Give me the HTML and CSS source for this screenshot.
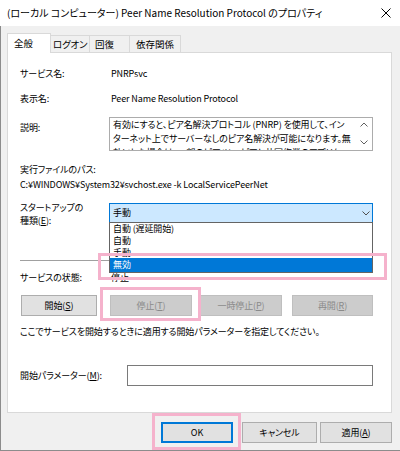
FILE: index.html
```html
<!DOCTYPE html>
<html lang="ja">
<head>
<meta charset="utf-8">
<title>Peer Name Resolution Protocol のプロパティ</title>
<link rel="stylesheet" href="styles.css">
</head>
<body>
<div class="window">
  <div class="titlebar">
    <span class="title">(ローカル コンピューター) Peer Name Resolution Protocol のプロパティ</span>
    <span class="close"><svg width="10" height="10" viewBox="0 0 10 10"><path d="M0.5 0.5L9.5 9.5M9.5 0.5L0.5 9.5" stroke="#000" stroke-width="1" fill="none"/></svg></span>
  </div>
  <div class="dlg">
    <div class="tabs">
      <div class="tab t1 active">全般</div>
      <div class="tab t2">ログオン</div>
      <div class="tab t3">回復</div>
      <div class="tab t4">依存関係</div>
    </div>
    <div class="panel">
      <div class="row">
        <span class="lbl">サービス名:</span><span class="val">PNRPsvc</span>
      </div>
      <div class="row r-gap">
        <span class="lbl">表示名:</span><span class="val">Peer Name Resolution Protocol</span>
      </div>
      <div class="row r-gap r-desc">
        <span class="lbl">説明:</span>
        <div class="descbox">
          <div class="desctext">有効にすると、ピア名解決プロトコル (PNRP) を使用して、イン<br>ターネット上でサーバーなしのピア名解決が可能になります。無<br>効にした場合は、一部のピア ツー ピアと共同作業のアプリケー</div>
          <div class="vscroll">
            <svg width="8" height="5" viewBox="0 0 8 5"><path d="M0.5 4.5L4 1L7.5 4.5" stroke="#606060" stroke-width="1" fill="none"/></svg>
            <svg width="8" height="5" viewBox="0 0 8 5"><path d="M0.5 0.5L4 4L7.5 0.5" stroke="#606060" stroke-width="1" fill="none"/></svg>
          </div>
        </div>
      </div>
      <div class="path-label">実行ファイルのパス:</div>
      <div class="path">C:¥WINDOWS¥System32¥svchost.exe -k LocalServicePeerNet</div>
      <div class="row r-start">
        <span class="lbl">スタートアップの<br>種類(<u>E</u>):</span>
        <div class="combo">
          <span>手動</span>
          <svg class="chev" width="8" height="5" viewBox="0 0 8 5"><path d="M0.5 0.5L4 4L7.5 0.5" stroke="#505050" stroke-width="1" fill="none"/></svg>
          <div class="dropdown">
            <div class="opt">自動 (遅延開始)</div>
            <div class="opt">自動</div>
            <div class="opt">手動</div>
            <div class="opt sel hl hl-item">無効</div>
          </div>
        </div>
      </div>
      <div class="sep"></div>
      <div class="row r-status">
        <span class="lbl">サービスの状態:</span><span class="val">停止</span>
      </div>
      <div class="btnrow">
        <button type="button" class="btn b-start">開始(<u>S</u>)</button>
        <button type="button" class="btn dis b-stop hl hl-stop">停止(<u>T</u>)</button>
        <button type="button" class="btn dis b-pause">一時停止(<u>P</u>)</button>
        <button type="button" class="btn dis b-resume">再開(<u>R</u>)</button>
      </div>
      <p class="hint">ここでサービスを開始するときに適用する開始パラメーターを指定してください。</p>
      <div class="r-param">
        <span class="lbl">開始パラメーター(<u>M</u>):</span>
        <div class="input"></div>
      </div>
    </div>
    <div class="footer">
      <button type="button" class="btn default b-ok hl hl-ok">OK</button>
      <button type="button" class="btn b-cancel">キャンセル</button>
      <button type="button" class="btn b-apply">適用(<u>A</u>)</button>
    </div>
  </div>
</div>
</body>
</html>
```
FILE: styles.css
```css
* { box-sizing: border-box; }
html, body { margin: 0; padding: 0; background: #f0f0f0; }
body {
  font-family: "Noto Sans CJK JP", "Noto Sans", sans-serif;
  font-size: 9px;
  letter-spacing: -0.12px;
  line-height: 14px;
  color: #000;
  font-feature-settings: "palt";
}
u { text-underline-offset: 1px; }

.window {
  width: 400px;
  height: 451px;
  position: relative;
  overflow: hidden;
  background: #f0f0f0;
}

.titlebar {
  height: 26px;
  background: #fff;
  display: flex;
  align-items: center;
  justify-content: space-between;
  padding: 0 9px 0 7px;
}
.title { white-space: nowrap; font-size: 10px; letter-spacing: 0; }
.close svg { display: block; }

.dlg {
  height: 425px;
  border-left: 1px solid #8c8c8c;
  border-bottom: 1px solid #8c8c8c;
  padding: 7px 8px 0 6px;
}

.tabs {
  display: flex;
  align-items: flex-end;
  height: 19px;
}
.tab {
  height: 17px;
  border: 1px solid #d9d9d9;
  border-bottom: 0;
  margin-left: -1px;
  line-height: 16px;
  background: #f0f0f0;
  font-size: 9.5px;
  letter-spacing: 0;
  white-space: nowrap;
  overflow: hidden;
}
.tab.active {
  height: 20px;
  margin-left: 0;
  margin-bottom: -1px;
  line-height: 18px;
  background: #fff;
  position: relative;
  z-index: 2;
}
.t1 { width: 44px; padding-left: 6px; }
.t2 { width: 40px; padding-left: 2px; letter-spacing: -0.2px; }
.t3 { width: 41px; padding-left: 5px; }
.t4 { width: 52px; padding-left: 6px; }

.panel {
  height: 361px;
  background: #fff;
  border: 1px solid #d9d9d9;
  padding: 14px 18px 0 12px;
}

.row {
  display: grid;
  grid-template-columns: 89px minmax(0, 1fr);
}
.val { padding-left: 2px; white-space: nowrap; }
.r-gap { margin-top: 11px; }
.r-desc .lbl { padding-top: 4px; }

.descbox {
  height: 34px;
  min-width: 0;
  border: 1px solid #acacac;
  display: flex;
  background: #fff;
}
.desctext {
  flex: 1 1 0;
  min-width: 0;
  padding-left: 3px;
  overflow: hidden;
  white-space: nowrap;
}
.vscroll {
  flex: 0 0 16px;
  display: flex;
  flex-direction: column;
  justify-content: space-between;
  align-items: center;
  padding: 4px 0 5px;
}
.vscroll svg { display: block; }

.path-label { margin-top: 12px; }
.path { margin-top: 1px; white-space: nowrap; }

.r-start { margin-top: 9px; }
.r-start .lbl { line-height: 13px; }

.combo {
  margin-top: 2px;
  height: 20px;
  position: relative;
  z-index: 5;
  border: 1px solid #0078d7;
  background: #cce8ff;
  display: flex;
  align-items: center;
  padding-left: 3px;
}
.chev { margin-left: auto; margin-right: 2px; display: block; }

.dropdown {
  position: absolute;
  top: 100%;
  left: -1px;
  right: -1px;
  background: #fff;
  border: 1px solid #646464;
}
.opt {
  height: 12px;
  line-height: 12px;
  padding-left: 3px;
  white-space: nowrap;
}
.opt.sel {
  height: 14px;
  line-height: 14px;
  margin-top: -1px;
  background: #0078d7;
  color: #fff;
}

.sep {
  margin-top: 33px;
  height: 1px;
  background: #a0a0a0;
}

.r-status { margin-top: 10px; }

.btnrow {
  margin-top: 10px;
  display: flex;
  height: 21px;
}

.btn {
  appearance: none;
  -webkit-appearance: none;
  margin: 0;
  height: 21px;
  padding: 0;
  border: 1px solid #adadad;
  background: #e1e1e1;
  font: inherit;
  letter-spacing: inherit;
  line-height: 14px;
  color: #000;
  display: flex;
  align-items: center;
  justify-content: center;
  white-space: nowrap;
}
.btn.dis {
  background: #cccccc;
  border-color: #bfbfbf;
  color: #8a8a8a;
}
.btn.default { border: 2px solid #0078d7; }

.b-start { margin-left: 1px; width: 76px; }
.b-stop { margin-left: 13px; width: 82px; }
.b-pause { margin-left: 8px; width: 82px; }
.b-resume { margin-left: 10px; width: 81px; }

.hint { margin: 9px 0 0; white-space: nowrap; }

.r-param {
  margin-top: 26px;
  display: grid;
  grid-template-columns: 107px minmax(0, 1fr);
  align-items: center;
}
.input {
  height: 21px;
  border: 1px solid #7a7a7a;
  background: #fff;
}

.footer {
  display: flex;
  justify-content: flex-end;
  margin-top: 9px;
}
.b-ok { width: 72px; margin-right: 9px; }
.b-cancel { width: 75px; margin-right: 3px; }
.b-apply { width: 72px; }

/* pink annotation frames */
.hl { position: relative; }
.hl::after {
  content: "";
  position: absolute;
  border: 3px solid #f5b2cc;
  pointer-events: none;
}
.hl-item::after { top: -5px; bottom: -8px; left: -12px; right: -15px; }
.hl-stop::after { top: -9px; bottom: -6px; left: -11px; right: -10px; }
.hl-ok::after { top: -11px; bottom: -9px; left: -11px; right: -10px; }
```
